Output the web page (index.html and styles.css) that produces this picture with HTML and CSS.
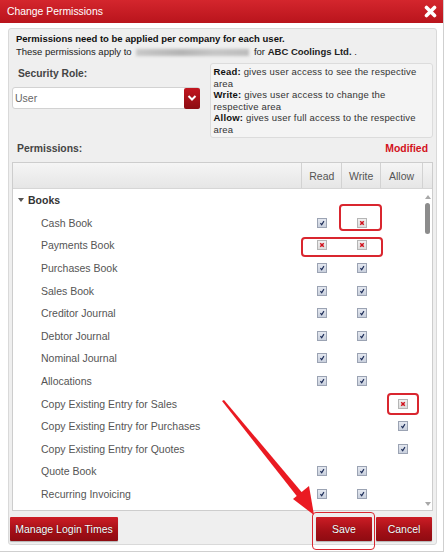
FILE: index.html
```html
<!DOCTYPE html>
<html lang="en">
<head>
    <meta charset="UTF-8">
    <title>Change Permissions</title>
    <link rel="stylesheet" href="styles.css">
</head>
<body>

<svg class="defs" width="0" height="0">
    <symbol id="tick" viewBox="0 0 10 10">
        <path d="M3 5.2 L4.6 7.2 L7.4 2.6" fill="none" stroke="#1f2f5a" stroke-width="1.5"/>
    </symbol>
    <symbol id="cross" viewBox="0 0 10 10">
        <path d="M2.8 2.8 L7.2 7.2 M7.2 2.8 L2.8 7.2" fill="none" stroke="#d0111c" stroke-width="1.8"/>
    </symbol>
</svg>

<div class="dialog">
    <div class="dialog-head">
        <span class="dialog-title">Change Permissions</span>
        <svg class="close" width="13" height="13" viewBox="0 0 13 13">
            <path d="M2.5 2.5 L10.5 10.5 M10.5 2.5 L2.5 10.5" stroke="#fff" stroke-width="3.6" stroke-linecap="round"/>
        </svg>
    </div>

    <div class="panel">
        <div class="intro">
            <div class="intro-strong">Permissions need to be applied per company for each user.</div>
            <div>These permissions apply to <span class="blurred"></span> for <b>ABC Coolings Ltd.</b> .</div>
        </div>

        <div class="role-row">
            <div class="role-col">
                <div class="role-label">Security Role:</div>
                <div class="select">
                    <span>User</span>
                    <span class="select-btn">
                        <svg width="10" height="8" viewBox="0 0 10 8"><path d="M1.5 2 L5 5.5 L8.5 2" fill="none" stroke="#fff" stroke-width="2"/></svg>
                    </span>
                </div>
            </div>
            <div class="legend">
                <div><b>Read:</b> gives user access to see the respective<br>area</div>
                <div><b>Write:</b> gives user access to change the<br>respective area</div>
                <div><b>Allow:</b> gives user full access to the respective<br>area</div>
            </div>
        </div>

        <div class="perm-head">
            <span>Permissions:</span>
            <span class="modified">Modified</span>
        </div>

        <div class="grid">
            <div class="grid-head">
                <div class="cell-name"></div>
                <div class="cell c-read">Read</div>
                <div class="cell c-write">Write</div>
                <div class="cell c-allow">Allow</div>
                <div class="cell-sb"></div>
            </div>
            <div class="grid-body">
                <div class="rows">
                    <div class="row group"><span class="caret"></span>Books</div>
                    <div class="row"><span class="name">Cash Book</span><span class="c-read"><svg class="cb"><use href="#tick"/></svg></span><span class="c-write"><svg class="cb off"><use href="#cross"/></svg></span><span class="c-allow"></span></div>
                    <div class="row"><span class="name">Payments Book</span><span class="c-read"><svg class="cb off"><use href="#cross"/></svg></span><span class="c-write"><svg class="cb off"><use href="#cross"/></svg></span><span class="c-allow"></span></div>
                    <div class="row"><span class="name">Purchases Book</span><span class="c-read"><svg class="cb"><use href="#tick"/></svg></span><span class="c-write"><svg class="cb"><use href="#tick"/></svg></span><span class="c-allow"></span></div>
                    <div class="row"><span class="name">Sales Book</span><span class="c-read"><svg class="cb"><use href="#tick"/></svg></span><span class="c-write"><svg class="cb"><use href="#tick"/></svg></span><span class="c-allow"></span></div>
                    <div class="row"><span class="name">Creditor Journal</span><span class="c-read"><svg class="cb"><use href="#tick"/></svg></span><span class="c-write"><svg class="cb"><use href="#tick"/></svg></span><span class="c-allow"></span></div>
                    <div class="row"><span class="name">Debtor Journal</span><span class="c-read"><svg class="cb"><use href="#tick"/></svg></span><span class="c-write"><svg class="cb"><use href="#tick"/></svg></span><span class="c-allow"></span></div>
                    <div class="row"><span class="name">Nominal Journal</span><span class="c-read"><svg class="cb"><use href="#tick"/></svg></span><span class="c-write"><svg class="cb"><use href="#tick"/></svg></span><span class="c-allow"></span></div>
                    <div class="row"><span class="name">Allocations</span><span class="c-read"><svg class="cb"><use href="#tick"/></svg></span><span class="c-write"><svg class="cb"><use href="#tick"/></svg></span><span class="c-allow"></span></div>
                    <div class="row"><span class="name">Copy Existing Entry for Sales</span><span class="c-read"></span><span class="c-write"></span><span class="c-allow"><svg class="cb off"><use href="#cross"/></svg></span></div>
                    <div class="row"><span class="name">Copy Existing Entry for Purchases</span><span class="c-read"></span><span class="c-write"></span><span class="c-allow"><svg class="cb"><use href="#tick"/></svg></span></div>
                    <div class="row"><span class="name">Copy Existing Entry for Quotes</span><span class="c-read"></span><span class="c-write"></span><span class="c-allow"><svg class="cb"><use href="#tick"/></svg></span></div>
                    <div class="row"><span class="name">Quote Book</span><span class="c-read"><svg class="cb"><use href="#tick"/></svg></span><span class="c-write"><svg class="cb"><use href="#tick"/></svg></span><span class="c-allow"></span></div>
                    <div class="row"><span class="name">Recurring Invoicing</span><span class="c-read"><svg class="cb"><use href="#tick"/></svg></span><span class="c-write"><svg class="cb"><use href="#tick"/></svg></span><span class="c-allow"></span></div>
                </div>
                <div class="scrollbar">
                    <span class="sb-up"></span>
                    <span class="sb-thumb"></span>
                    <span class="sb-down"></span>
                </div>
            </div>
        </div>

        <div class="actions">
            <button class="btn">Manage Login Times</button>
            <span class="spacer"></span>
            <button class="btn btn-save">Save</button>
            <button class="btn btn-cancel">Cancel</button>
        </div>
    </div>

    <!-- annotations drawn over the dialog -->
    <span class="mark mark-cash"></span>
    <span class="mark mark-payments"></span>
    <span class="mark mark-sales"></span>
    <span class="mark mark-save"></span>
    <svg class="arrow" width="446" height="553" viewBox="0 0 446 553">
        <path d="M222 401 L224 400 L304.5 495.5 L299.5 499.5 Z" fill="#ea1a22"/>
        <path d="M314 515 L293 499 L309 486 Z" fill="#ea1a22"/>
    </svg>
</div>

</body>
</html>
```

FILE: styles.css
```css
body {
    margin: 0;
    font-family: "Liberation Sans", Arial, sans-serif;
    background: #fff;
    color: #333;
}

.defs {
    position: absolute;
}

.dialog {
    position: relative;
    width: 443px;
    height: 551px;
    border-right: 1px solid #cfcfcf;
    border-bottom: 1px solid #cfcfcf;
    background: #fff;
}

.dialog-head {
    height: 23px;
    display: flex;
    align-items: center;
    justify-content: space-between;
    padding: 0 6px 0 7px;
    background: linear-gradient(#d4262d, #b9141c);
}

.dialog-title {
    color: #fff;
    font-size: 10.4px;
}

.close {
    display: block;
}

.panel {
    margin: 5px 0 0 8px;
    width: 421px;
    height: 512px;
    padding: 0 3px 3px 3px;
    border: 1px solid #d9d9d9;
    border-radius: 3px;
    background: #efefef;
    display: flex;
    flex-direction: column;
}

.intro {
    padding: 3px 0 0 4px;
    font-size: 9.5px;
    line-height: 13px;
    color: #222;
}

.intro-strong {
    font-weight: bold;
    color: #111;
}

.blurred {
    display: inline-block;
    width: 113px;
    height: 7px;
    margin: 0 2px;
    vertical-align: middle;
    background: linear-gradient(to right, #c8c8c8, #b4b4b4 40%, #c6c6c6 70%, #bcbcbc);
    filter: blur(1.5px);
}

.role-row {
    display: flex;
    margin-top: 5px;
}

.role-col {
    width: 188px;
    margin-right: 10px;
}

.role-label {
    margin-top: 4px;
    padding-left: 6px;
    font-size: 10.3px;
    line-height: 13px;
    font-weight: bold;
    color: #444;
}

.select {
    margin-top: 7px;
    height: 20px;
    display: flex;
    align-items: center;
    justify-content: space-between;
    border: 1px solid #d2d2d2;
    border-radius: 3px;
    background: #fff;
    font-size: 10.5px;
    color: #666;
    padding-left: 2px;
}

.select-btn {
    width: 16px;
    height: 21px;
    margin-right: -1px;
    display: flex;
    align-items: center;
    justify-content: center;
    border-radius: 2px;
    background: linear-gradient(#c2161f, #8c0c12);
}

.legend {
    width: 216px;
    height: 69px;
    padding: 2px 3px 2px;
    border: 1px solid #dcdcdc;
    border-radius: 3px;
    background: #f4f4f4;
    font-size: 9.5px;
    letter-spacing: 0.18px;
    line-height: 11.5px;
    color: #333;
}

.legend b {
    color: #111;
}

.perm-head {
    display: flex;
    justify-content: space-between;
    padding: 4px 5px 7px 5px;
    font-size: 10.4px;
    line-height: 13px;
    font-weight: bold;
    color: #444;
}

.modified {
    color: #d3121b;
}

.grid {
    height: 348px;
    border: 1px solid #cdcdcd;
    background: #fff;
    display: flex;
    flex-direction: column;
}

.grid-head {
    height: 25px;
    display: flex;
    border-bottom: 1px solid #d6d6d6;
    background: linear-gradient(#f5f5f5, #e6e6e6);
    font-size: 10.5px;
    color: #555;
}

.cell-name {
    width: 289px;
}

.cell {
    display: flex;
    align-items: center;
    justify-content: center;
    border-left: 1px solid #d2d2d2;
}

.c-read {
    width: 39px;
}

.c-write {
    width: 38px;
}

.c-allow {
    width: 41px;
}

.cell-sb {
    width: 9px;
    border-left: 1px solid #d2d2d2;
}

.grid-body {
    flex: 1;
    display: flex;
    overflow: hidden;
}

.rows {
    width: 410px;
}

.row {
    height: 22.6px;
    display: flex;
    align-items: center;
    font-size: 10.5px;
    color: #555;
}

.row .name {
    width: 261px;
    padding-left: 28px;
}

.row .c-read,
.row .c-write,
.row .c-allow {
    display: flex;
    justify-content: center;
    margin-left: 1px;
}

.row .c-write {
    margin-left: 2px;
}

.group {
    padding-left: 5px;
    font-weight: bold;
    color: #333;
}

.caret {
    width: 0;
    height: 0;
    margin-right: 4px;
    border-left: 3.5px solid transparent;
    border-right: 3.5px solid transparent;
    border-top: 4.5px solid #555;
}

.cb {
    width: 10px;
    height: 10px;
    border: 1px solid #9ba3b3;
    box-sizing: border-box;
    background: linear-gradient(#e4e8f0, #c9d0dd);
}

.cb.off {
    border-color: #b5b5b5;
    background: linear-gradient(#f0f0f0, #dcdcdc);
}

.scrollbar {
    width: 9px;
    display: flex;
    flex-direction: column;
    align-items: center;
    padding: 6px 0 4px 0;
}

.sb-up,
.sb-down {
    width: 0;
    height: 0;
    border-left: 3.5px solid transparent;
    border-right: 3.5px solid transparent;
}

.sb-up {
    border-bottom: 4px solid #a8a8a8;
}

.sb-down {
    margin-top: auto;
    border-top: 4px solid #a8a8a8;
}

.sb-thumb {
    width: 5px;
    height: 31px;
    margin-top: 4px;
    border-radius: 3px;
    background: #8c8c8c;
}

.actions {
    display: flex;
    margin: 6px 1px 0 -2px;
}

.spacer {
    flex: 1;
}

.btn {
    height: 24px;
    padding: 0;
    border: none;
    border-radius: 1px;
    background: linear-gradient(#cc1d25, #a20f16 60%, #8e0b11);
    box-shadow: 0 1px 1px rgba(0, 0, 0, 0.25);
    color: #fff;
    font-family: "Liberation Sans", Arial, sans-serif;
    font-size: 10.5px;
    text-shadow: 0 0 1px rgba(0, 0, 0, 0.7);
}

.btn:first-child {
    width: 108px;
}

.btn-save {
    width: 56px;
    margin-right: 4px;
}

.btn-cancel {
    width: 56px;
}

.mark {
    position: absolute;
    border: 2px solid #d9262f;
    border-radius: 4px;
    box-sizing: border-box;
}

.mark-cash {
    left: 339px;
    top: 204px;
    width: 43px;
    height: 27px;
}

.mark-payments {
    left: 301px;
    top: 237px;
    width: 82px;
    height: 20px;
}

.mark-sales {
    left: 387px;
    top: 393px;
    width: 32px;
    height: 22px;
}

.mark-save {
    left: 312px;
    top: 512px;
    width: 63px;
    height: 38px;
    border-width: 1.5px;
}

.arrow {
    position: absolute;
    left: 0;
    top: 0;
    pointer-events: none;
}
```
